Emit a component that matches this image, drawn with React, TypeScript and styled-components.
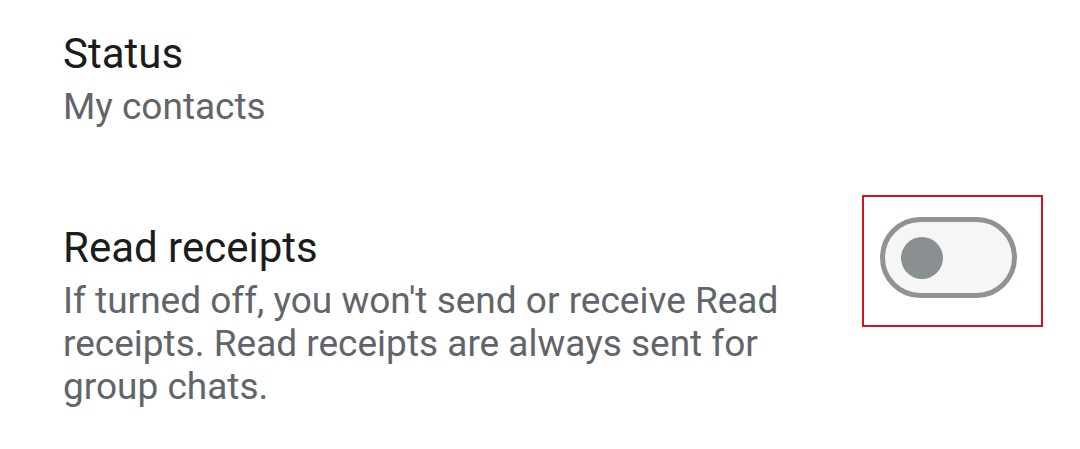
import React from 'react';
import styled, { createGlobalStyle } from 'styled-components';

const GlobalStyle = createGlobalStyle`
  html, body {
    margin: 0;
    padding: 0;
    background: #ffffff;
  }
  body {
    font-family: Roboto, "Noto Sans", "Liberation Sans", sans-serif;
    -webkit-font-smoothing: antialiased;
  }
`;

const Page = styled.div`
  width: 1080px;
  height: 449px;
  box-sizing: border-box;
  padding: 29px 37px 0 63px;
  display: flex;
  flex-direction: column;
  gap: 95px;
  overflow: hidden;
`;

const Row = styled.div`
  display: flex;
  align-items: flex-start;
  justify-content: space-between;
`;

const TextBlock = styled.div`
  display: flex;
  flex-direction: column;
  gap: 6px;
  width: 780px;
`;

const Title = styled.div`
  font-size: 42px;
  line-height: 50px;
  color: #1c1c1c;
`;

const Summary = styled.div`
  font-size: 37px;
  line-height: 43px;
  color: #60656a;
`;

const Highlight = styled.div`
  border: 2px solid #d6121a;
  padding: 20px 24px 27px 16px;
  margin-top: -28px;
`;

const Track = styled.div`
  width: 137px;
  height: 81px;
  box-sizing: border-box;
  border: 5px solid #8e9394;
  border-radius: 41px;
  background: #f6f6f6;
  display: flex;
  align-items: center;
  padding-left: 16px;
`;

const Thumb = styled.div`
  width: 42px;
  height: 42px;
  border-radius: 50%;
  background: #8a9092;
`;

const SettingsRow: React.FC<{ title: string; summary: string; toggle?: boolean }> = ({
  title,
  summary,
  toggle,
}) => (
  <Row>
    <TextBlock>
      <Title>{title}</Title>
      <Summary>{summary}</Summary>
    </TextBlock>
    {toggle && (
      <Highlight>
        <Track>
          <Thumb />
        </Track>
      </Highlight>
    )}
  </Row>
);

export default function App() {
  return (
    <>
      <GlobalStyle />
      <Page>
        <SettingsRow title="Status" summary="My contacts" />
        <SettingsRow
          title="Read receipts"
          summary="If turned off, you won't send or receive Read receipts. Read receipts are always sent for group chats."
          toggle
        />
      </Page>
    </>
  );
}
